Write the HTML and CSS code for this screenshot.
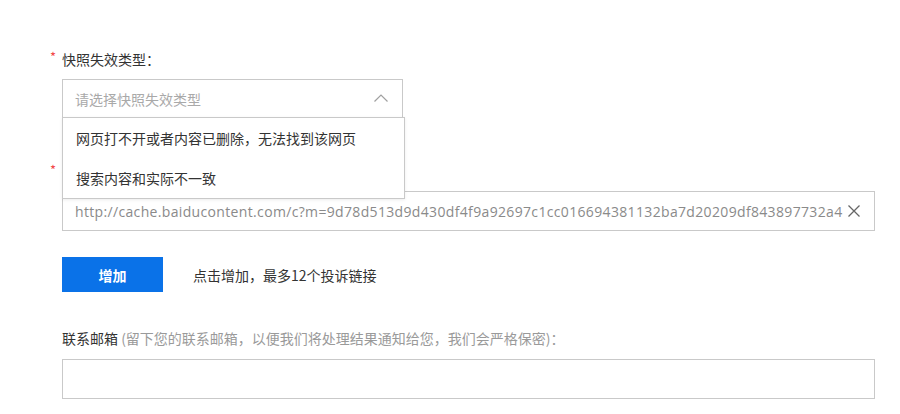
FILE: index.html
```html
<!DOCTYPE html>
<html lang="zh-CN">
<head>
<meta charset="utf-8">
<title>快照投诉</title>
<link rel="stylesheet" href="styles.css">
</head>
<body>
<form class="form">
  <div class="field field-type">
    <div class="label"><span class="req">*</span>快照失效类型：</div>
    <div class="select-wrap">
      <div class="select">
        <span class="placeholder">请选择快照失效类型</span>
        <svg class="caret" width="14" height="8" viewBox="0 0 14 8"><path d="M0.5 7.5 L7 1 L13.5 7.5" fill="none" stroke="#a0a0a0" stroke-width="1.2"/></svg>
      </div>
      <ul class="dropdown">
        <li>网页打不开或者内容已删除，无法找到该网页</li>
        <li>搜索内容和实际不一致</li>
      </ul>
    </div>
  </div>

  <div class="field field-url">
    <div class="label"><span class="req">*</span>快照链接：</div>
    <div class="input url-input">
      <span class="url-text">http://cache.baiducontent.com/c?m=9d78d513d9d430df4f9a92697c1cc016694381132ba7d20209df843897732a4</span>
      <svg class="clear" width="12" height="12" viewBox="0 0 12 12"><path d="M0.5 0.5 L11.5 11.5 M11.5 0.5 L0.5 11.5" fill="none" stroke="#666" stroke-width="1.3"/></svg>
    </div>
  </div>

  <div class="add-row">
    <button type="button" class="btn-add">增加</button>
    <span class="add-tip">点击增加，最多12个投诉链接</span>
  </div>

  <div class="field field-email">
    <div class="label label-plain">联系邮箱 <span class="hint">(留下您的联系邮箱，以便我们将处理结果通知给您，我们会严格保密)：</span></div>
    <div class="input"></div>
  </div>
</form>
</body>
</html>
```

FILE: styles.css
```css
* { box-sizing: border-box; }
html, body { margin: 0; padding: 0; background: #fff; }
body {
  font-family: "Noto Sans CJK SC", "Open Sans", sans-serif;
  font-size: 14px;
  color: #333;
  width: 900px;
  height: 414px;
  overflow: hidden;
}
.form {
  padding: 49px 0 0 62px;
  width: 875px;
}
.field { display: flex; flex-direction: column; }
.label {
  position: relative;
  line-height: 20px;
  height: 20px;
  margin-bottom: 10px;
  color: #333;
}
.req {
  position: absolute;
  left: -12px;
  top: -2px;
  color: #f24848;
  font-size: 13px;
}
.select-wrap {
  position: relative;
  width: 341px;
}
.select {
  height: 40px;
  border: 1px solid #c9c9c9;
  display: flex;
  align-items: center;
  justify-content: space-between;
  padding: 0 14px 0 12px;
}
.placeholder { color: #a9a9a9; }
.caret { margin-top: -2px; }
.dropdown {
  position: absolute;
  top: 38px;
  left: 0;
  width: 343px;
  margin: 0;
  padding: 0;
  list-style: none;
  background: #fff;
  border: 1px solid #c9c9c9;
  box-shadow: 0 1px 3px rgba(0,0,0,0.08);
  z-index: 5;
}
.dropdown li {
  height: 40px;
  line-height: 40px;
  padding-left: 13px;
  color: #333;
}
.field-url { margin-top: 43px; }
.field-url .label { margin-bottom: 9px; }
.input {
  height: 40px;
  border: 1px solid #c9c9c9;
  width: 813px;
}
.url-input {
  display: flex;
  align-items: center;
  padding: 0 13px 0 12px;
}
.url-text {
  font-family: "Open Sans", "Noto Sans CJK SC", sans-serif;
  color: #8a8a8a;
  font-size: 14px;
  white-space: nowrap;
  letter-spacing: 0.34px;
}
.clear { flex: none; margin-left: 5px; }
.add-row {
  display: flex;
  align-items: center;
  margin-top: 26px;
}
.btn-add {
  width: 101px;
  height: 35px;
  border: 0;
  background: #0a72e8;
  color: #fff;
  font-family: "Noto Sans CJK SC", sans-serif;
  font-size: 14px;
  font-weight: bold;
  padding: 0;
}
.add-tip { margin-left: 30px; color: #333; }
.field-email { margin-top: 36px; }
.field-email .label { margin-bottom: 11px; }
.hint { color: #9a9a9a; }
```
